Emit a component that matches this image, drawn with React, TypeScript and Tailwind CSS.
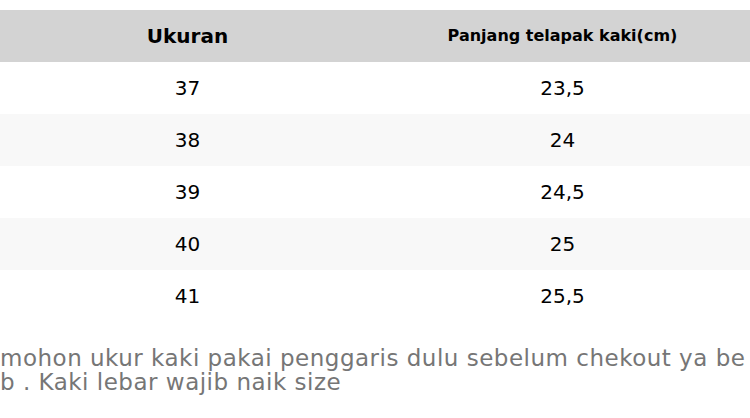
import React from "react";

const rows: [string, string][] = [
  ["37", "23,5"],
  ["38", "24"],
  ["39", "24,5"],
  ["40", "25"],
  ["41", "25,5"],
];

export default function App() {
  return (
    <div
      className="w-[750px] h-[418px] bg-white overflow-hidden pt-[10px]"
      style={{ fontFamily: '"DejaVu Sans", Verdana, sans-serif' }}
    >
      <div className="grid grid-cols-2 h-[52px] bg-[#d3d3d3] text-black font-bold">
        <div className="flex items-center justify-center text-[20px]">Ukuran</div>
        <div className="flex items-center justify-center text-[16px]">Panjang telapak kaki(cm)</div>
      </div>
      {rows.map(([a, b], i) => (
        <div
          key={a}
          className={
            "grid grid-cols-2 h-[52px] text-[20px] text-black " +
            (i % 2 === 1 ? "bg-[#f8f8f8]" : "bg-white")
          }
        >
          <div className="flex items-center justify-center">{a}</div>
          <div className="flex items-center justify-center">{b}</div>
        </div>
      ))}
      <p className="mt-[24px] text-[23px] leading-[24px] tracking-[0.5px] text-[#767676] break-all w-[750px]">
        mohon ukur kaki pakai penggaris dulu sebelum chekout ya beb . Kaki lebar wajib naik size
      </p>
    </div>
  );
}
